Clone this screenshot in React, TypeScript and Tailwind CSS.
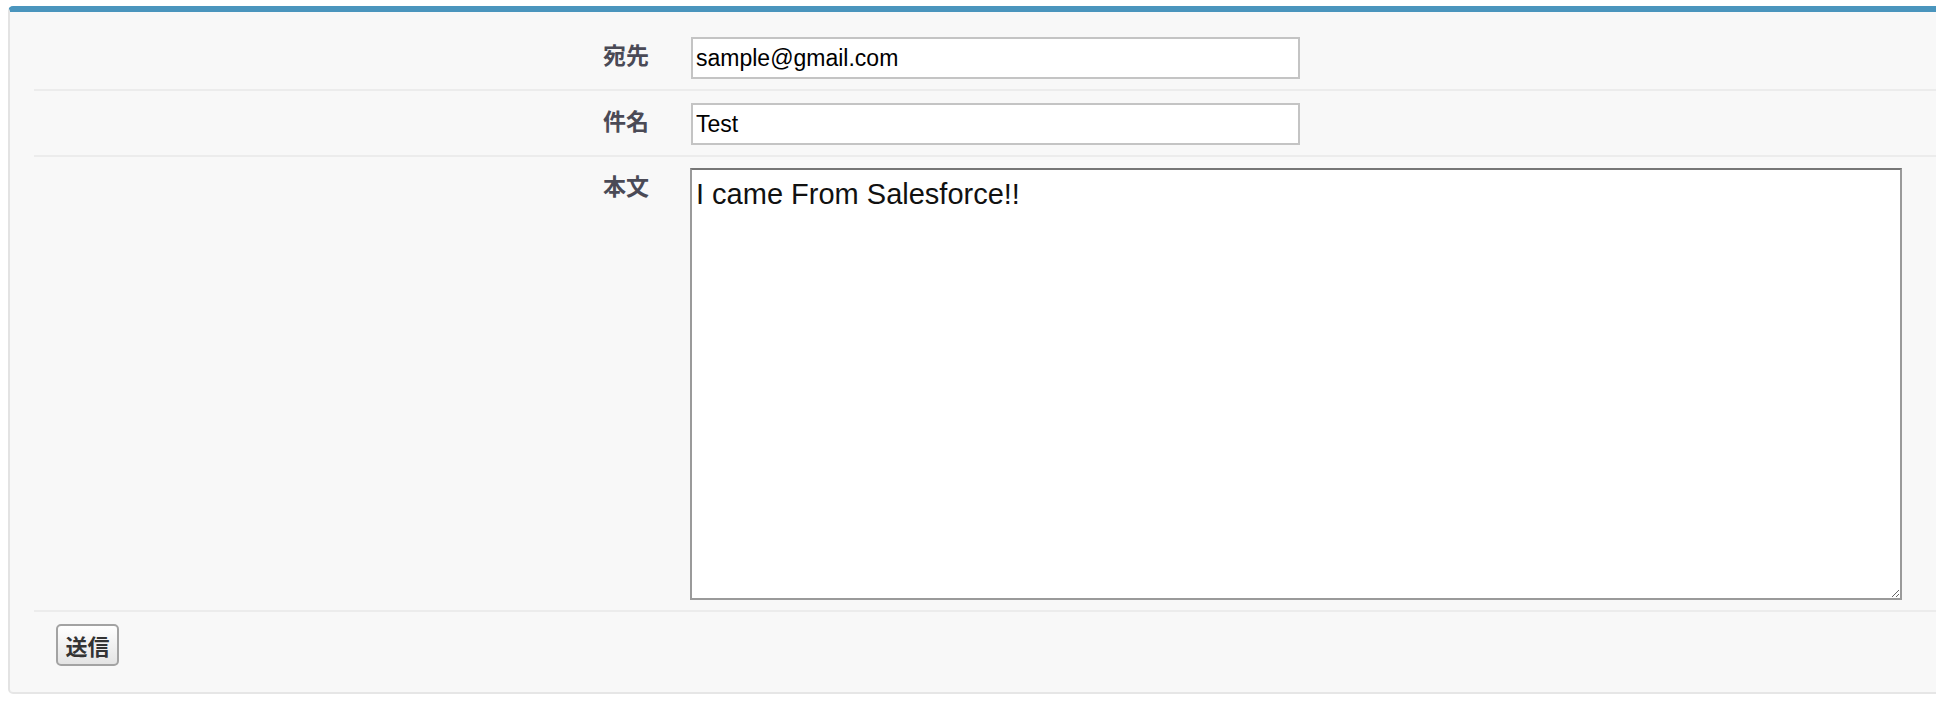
const labelCls =
  "w-[615px] shrink-0 text-right text-[23px] leading-[34px] font-bold text-[#4a4a56] font-['Noto_Sans_CJK_JP',sans-serif]";

export default function App() {
  return (
    <div className="min-h-[704px] overflow-hidden bg-white pt-[6px] pl-[8px] font-['Liberation_Sans','Noto_Sans_CJK_JP',sans-serif]">
      <div className="w-[1960px] rounded-[5px] border-t-[6px] border-l-2 border-b-2 border-t-[#4a95bd] border-l-[#e3e3e3] border-b-[#e6e6e6] bg-[#f8f8f8] pt-[13px] pl-[24px]">
        <div className="flex border-b-2 border-[#ececec] pt-[12px] pb-[10px]">
          <div className={labelCls}>宛先</div>
          <input
            className="ml-[42px] h-[42px] w-[609px] border-2 border-[#c4c4c4] bg-white px-[3px] text-[23px] text-black outline-none"
            defaultValue="sample@gmail.com"
          />
        </div>
        <div className="flex border-b-2 border-[#ececec] pt-[12px] pb-[10px]">
          <div className={labelCls}>件名</div>
          <input
            className="ml-[42px] h-[42px] w-[609px] border-2 border-[#c4c4c4] bg-white px-[3px] text-[23px] text-black outline-none"
            defaultValue="Test"
          />
        </div>
        <div className="flex border-b-2 border-[#ececec] pt-[11px] pb-[10px]">
          <div className={labelCls}>本文</div>
          <textarea
            className="ml-[41px] h-[432px] w-[1212px] resize border-2 border-[#9a9a9a] border-t-[#767676] bg-white pt-[8px] pl-[4px] text-[29px] leading-[33px] text-[#111] outline-none"
            defaultValue="I came From Salesforce!!"
          />
        </div>
        <div className="pt-[12px] pb-[26px] pl-[22px]">
          <button className="h-[42px] w-[63px] rounded-[5px] border-2 border-[#a3a3a3] bg-linear-to-b from-white to-[#e4e4e4] text-[22px] font-bold text-[#333] font-['Noto_Sans_CJK_JP',sans-serif]">
            送信
          </button>
        </div>
      </div>
    </div>
  );
}
